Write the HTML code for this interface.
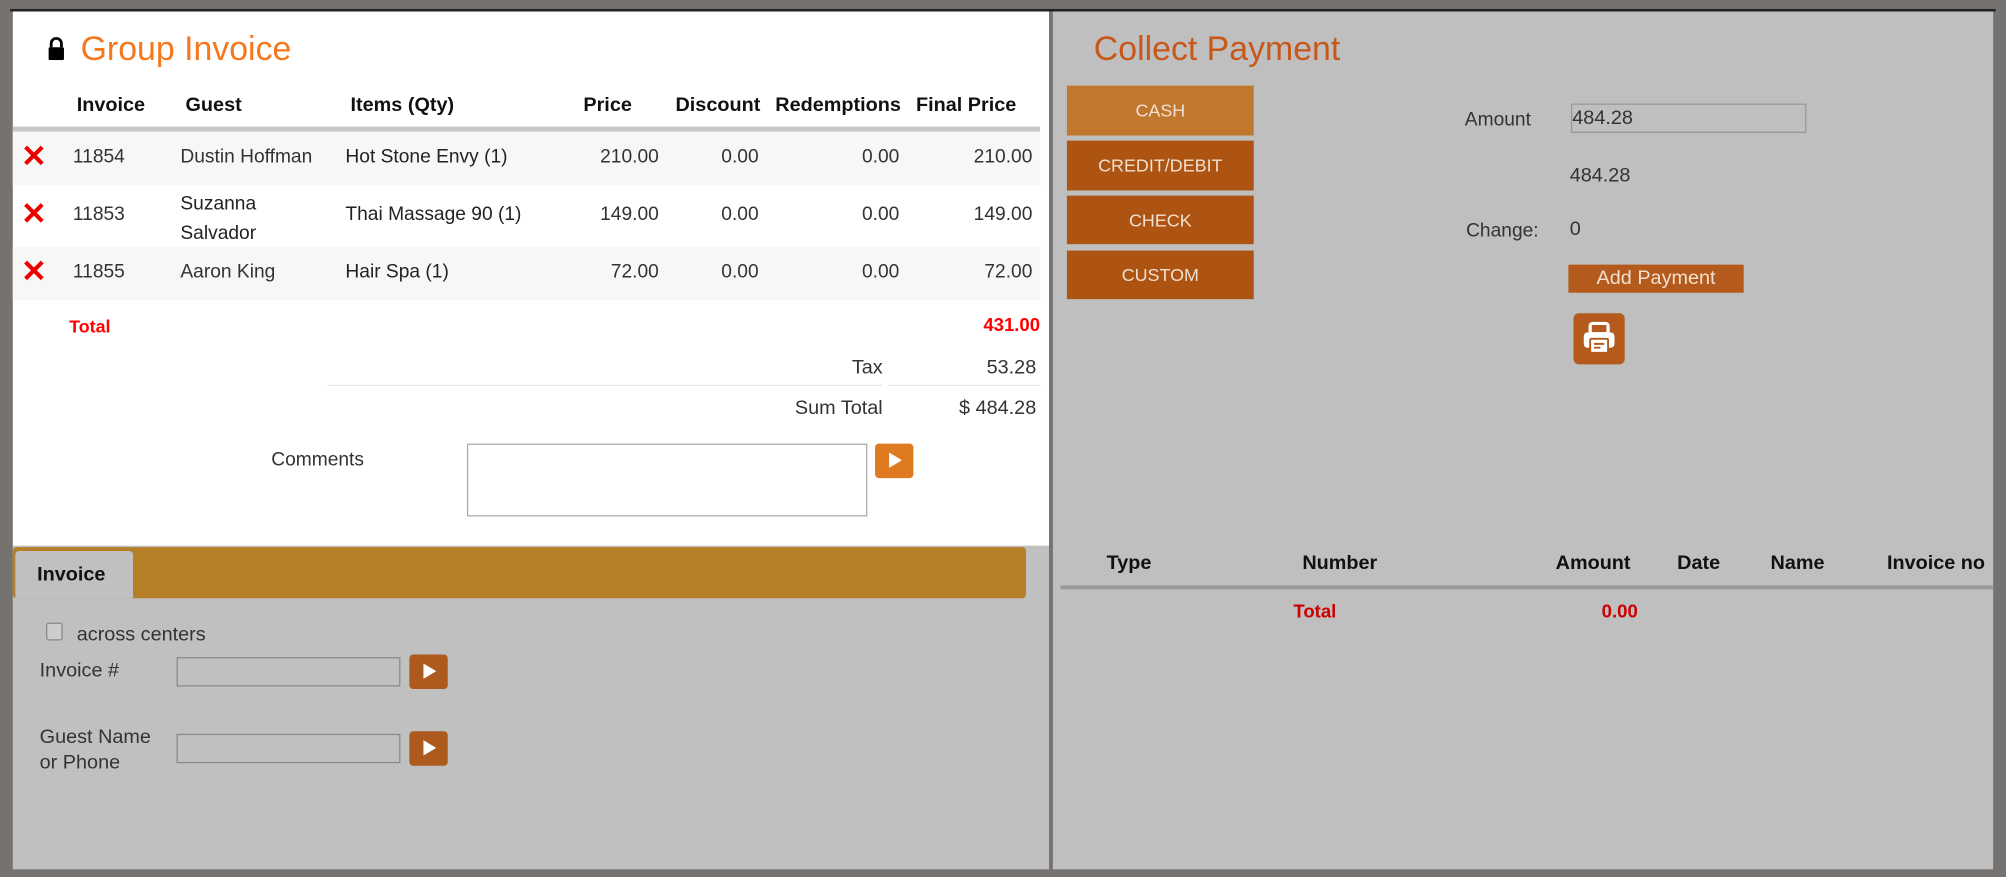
<!DOCTYPE html>
<html><head><meta charset="utf-8"><style>
*{margin:0;padding:0;box-sizing:border-box}
html,body{width:2006px;height:877px;overflow:hidden;background:#767270}
#w{position:absolute;left:0;top:0;width:1568px;height:686px;transform:scale(1.2793,1.2784);transform-origin:0 0;font-family:"Liberation Sans","DejaVu Sans",sans-serif;color:#333}
.a{position:absolute;white-space:nowrap}
.b{font-weight:bold;color:#111;font-size:15.5px}
.t{font-size:15px}
.r{text-align:right}
.btn{position:absolute;left:834px;width:146px;color:#f0e0d0;font-size:14px;text-align:center;background:#ad5413}
.arr{position:absolute;width:30px;height:27px;border-radius:3px;background:#ad5a1f}
.arr:after{content:"";position:absolute;left:11px;top:7px;border-left:10px solid #fff;border-top:6.5px solid transparent;border-bottom:6.5px solid transparent}
.inp{position:absolute;border:1px solid #8a8a8a;background:#c0c0c0}
.x{position:absolute;left:18px}
</style></head><body><div id="w">
<div class="a" style="left:8px;top:7px;width:1552px;height:2px;background:#222"></div>
<div class="a" style="left:10px;top:9px;width:810px;height:418px;background:#fff"></div>
<div class="a" style="left:10px;top:427px;width:810px;height:253px;background:#c0c0c0"></div>
<div class="a" style="left:823px;top:9px;width:735px;height:671px;background:#bfbfbf"></div>
<svg class="a" style="left:37px;top:29px" width="14" height="18" viewBox="0 0 14 18"><path d="M3 8V5a4 4 0 0 1 8 0v3" fill="none" stroke="#000" stroke-width="2.2"/><rect x="1" y="8" width="12" height="10" rx="1" fill="#000"/></svg>
<div class="a" style="left:63px;top:23px;font-size:27px;color:#f5781f;transform:scaleX(0.98);transform-origin:0 0">Group Invoice</div>
<div class="a b" style="left:60px;top:74px">Invoice</div>
<div class="a b" style="left:145px;top:74px">Guest</div>
<div class="a b" style="left:274px;top:74px">Items (Qty)</div>
<div class="a b" style="left:456px;top:74px">Price</div>
<div class="a b" style="left:528px;top:74px">Discount</div>
<div class="a b" style="left:606px;top:74px;width:103px;overflow:hidden">Redemptions</div>
<div class="a b" style="left:716px;top:74px">Final Price</div>
<div class="a" style="left:10px;top:99px;width:803px;height:4px;background:#c8c8c8"></div>
<div class="a" style="left:10px;top:103px;width:803px;height:42px;background:#f7f7f7"></div>
<div class="a" style="left:10px;top:193px;width:803px;height:42px;background:#f7f7f7"></div>
<svg class="x" style="top:113px" width="17" height="17" viewBox="0 0 17 17"><path d="M2 2L15 15M15 2L2 15" stroke="#e00" stroke-width="3.2"/></svg>
<svg class="x" style="top:158px" width="17" height="17" viewBox="0 0 17 17"><path d="M2 2L15 15M15 2L2 15" stroke="#e00" stroke-width="3.2"/></svg>
<svg class="x" style="top:203px" width="17" height="17" viewBox="0 0 17 17"><path d="M2 2L15 15M15 2L2 15" stroke="#e00" stroke-width="3.2"/></svg>
<div class="a t" style="left:57px;top:114px">11854</div>
<div class="a t" style="left:141px;top:114px">Dustin Hoffman</div>
<div class="a t" style="left:270px;top:114px;color:#222">Hot Stone Envy (1)</div>
<div class="a t r" style="left:415px;top:114px;width:100px">210.00</div>
<div class="a t r" style="left:493px;top:114px;width:100px">0.00</div>
<div class="a t r" style="left:603px;top:114px;width:100px">0.00</div>
<div class="a t r" style="left:707px;top:114px;width:100px">210.00</div>
<div class="a t" style="left:57px;top:159px">11853</div>
<div class="a t" style="left:141px;top:148px;line-height:23px;color:#222">Suzanna<br>Salvador</div>
<div class="a t" style="left:270px;top:159px;color:#222">Thai Massage 90 (1)</div>
<div class="a t r" style="left:415px;top:159px;width:100px">149.00</div>
<div class="a t r" style="left:493px;top:159px;width:100px">0.00</div>
<div class="a t r" style="left:603px;top:159px;width:100px">0.00</div>
<div class="a t r" style="left:707px;top:159px;width:100px">149.00</div>
<div class="a t" style="left:57px;top:204px">11855</div>
<div class="a t" style="left:141px;top:204px">Aaron King</div>
<div class="a t" style="left:270px;top:204px;color:#222">Hair Spa (1)</div>
<div class="a t r" style="left:415px;top:204px;width:100px">72.00</div>
<div class="a t r" style="left:493px;top:204px;width:100px">0.00</div>
<div class="a t r" style="left:603px;top:204px;width:100px">0.00</div>
<div class="a t r" style="left:707px;top:204px;width:100px">72.00</div>
<div class="a" style="left:54px;top:247px;color:#f00;font-weight:bold;font-size:14px">Total</div>
<div class="a r" style="left:713px;top:247px;width:100px;color:#f00;font-weight:bold;font-size:14.5px">431.00</div>
<div class="a r" style="left:590px;top:279px;width:100px;font-size:15.5px">Tax</div>
<div class="a r" style="left:710px;top:279px;width:100px;font-size:15.5px">53.28</div>
<div class="a" style="left:256px;top:301px;width:434px;height:1px;background:#e8e8e8"></div>
<div class="a" style="left:694px;top:301px;width:119px;height:1px;background:#e8e8e8"></div>
<div class="a r" style="left:560px;top:311px;width:130px;font-size:15.5px">Sum Total</div>
<div class="a r" style="left:700px;top:311px;width:110px;font-size:15.5px">$ 484.28</div>
<div class="a t" style="left:212px;top:351px">Comments</div>
<div class="a" style="left:365px;top:347px;width:313px;height:57px;border:1px solid #aaa;background:#fff"></div>
<div class="arr" style="left:684px;top:347px;background:#e07a20"></div>
<div class="a" style="left:10px;top:428px;width:792px;height:40px;background:#b57f27;border-radius:3px"></div>
<div class="a" style="left:12px;top:431px;width:92px;height:37px;background:#c0c0c0;border-radius:3px 3px 0 0"></div>
<div class="a b" style="left:29px;top:441px">Invoice</div>
<div class="a" style="left:36px;top:487px;width:13px;height:14px;border:1px solid #888;border-radius:2px;background:#ccc"></div>
<div class="a" style="left:60px;top:488px;font-size:15.5px">across centers</div>
<div class="a" style="left:31px;top:516px;font-size:15.5px">Invoice #</div>
<div class="inp" style="left:138px;top:514px;width:175px;height:23px"></div>
<div class="arr" style="left:320px;top:512px"></div>
<div class="a" style="left:31px;top:567px;font-size:15.5px;line-height:20px">Guest Name<br>or Phone</div>
<div class="inp" style="left:138px;top:574px;width:175px;height:23px"></div>
<div class="arr" style="left:320px;top:572px"></div>
<div class="a" style="left:855px;top:23px;font-size:27px;color:#c8581a;transform:scaleX(0.98);transform-origin:0 0">Collect Payment</div>
<div class="btn" style="top:67px;height:39px;line-height:39px;background:#c0772e">CASH</div>
<div class="btn" style="top:110px;height:39px;line-height:39px">CREDIT/DEBIT</div>
<div class="btn" style="top:153px;height:38px;line-height:38px">CHECK</div>
<div class="btn" style="top:196px;height:38px;line-height:38px">CUSTOM</div>
<div class="a t" style="left:1145px;top:85px">Amount</div>
<div class="a" style="left:1228px;top:81px;width:184px;height:23px;border:1px solid #999;font-size:15.5px;line-height:21px;color:#333">484.28</div>
<div class="a" style="left:1227px;top:129px;font-size:15.5px">484.28</div>
<div class="a t" style="left:1146px;top:172px">Change:</div>
<div class="a" style="left:1227px;top:171px;font-size:15.5px">0</div>
<div class="a" style="left:1226px;top:207px;width:137px;height:22px;background:#b45a1c;color:#f0e0d0;font-size:15.5px;text-align:center;line-height:22px">Add Payment</div>
<div class="a" style="left:1230px;top:245px;width:40px;height:40px;border-radius:4px;background:#b45a1c"></div>
<svg class="a" style="left:1236px;top:250px" width="28" height="30" viewBox="0 0 28 30"><rect x="7" y="3" width="14" height="8" rx="2" fill="none" stroke="#fff" stroke-width="2.5"/><rect x="2" y="10" width="24" height="12" rx="3" fill="#fff"/><rect x="7" y="15" width="14" height="11" rx="1" fill="#fff" stroke="#b45a1c" stroke-width="1.5"/><path d="M10 19h8M10 22h5" stroke="#b45a1c" stroke-width="1.5"/></svg>
<div class="a b" style="left:865px;top:432px">Type</div>
<div class="a b" style="left:1018px;top:432px">Number</div>
<div class="a b" style="left:1216px;top:432px">Amount</div>
<div class="a b" style="left:1311px;top:432px">Date</div>
<div class="a b" style="left:1384px;top:432px">Name</div>
<div class="a b" style="left:1475px;top:432px">Invoice no</div>
<div class="a" style="left:829px;top:458px;width:729px;height:3px;background:#999"></div>
<div class="a" style="left:1011px;top:471px;color:#c00;font-weight:bold;font-size:14.5px">Total</div>
<div class="a" style="left:1252px;top:471px;color:#c00;font-weight:bold;font-size:14.5px">0.00</div>
</div></body></html>
